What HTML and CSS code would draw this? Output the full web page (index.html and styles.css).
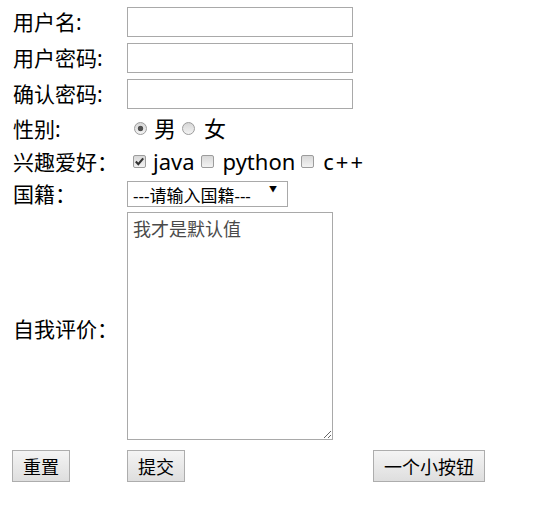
FILE: index.html
```html
<!DOCTYPE html>
<html lang="zh-CN">
<head>
<meta charset="utf-8">
<title>注册</title>
<link rel="stylesheet" href="styles.css">
</head>
<body>
<form class="form">
  <div class="row row-text">
    <span class="label">用户名:</span>
    <input class="text" type="text">
  </div>
  <div class="row row-text">
    <span class="label">用户密码:</span>
    <input class="text" type="password">
  </div>
  <div class="row row-text">
    <span class="label">确认密码:</span>
    <input class="text" type="password">
  </div>
  <div class="row row-choice">
    <span class="label">性别:</span>
    <span class="options">
      <input class="radio radio-first" type="radio" name="sex" checked><span class="opt">男</span>
      <input class="radio" type="radio" name="sex"><span class="opt opt-wide">女</span>
    </span>
  </div>
  <div class="row row-choice">
    <span class="label">兴趣爱好：</span>
    <span class="options">
      <input class="check check-first" type="checkbox" checked><span class="opt">java</span>
      <input class="check" type="checkbox"><span class="opt opt-wide">python</span>
      <input class="check" type="checkbox"><span class="opt opt-spaced">c++</span>
    </span>
  </div>
  <div class="row row-select">
    <span class="label">国籍：</span>
    <span class="select-wrap">
      <select class="select"><option>---请输入国籍---</option></select>
    </span>
  </div>
  <div class="row row-area">
    <span class="label label-area">自我评价：</span>
    <textarea class="area">我才是默认值</textarea>
  </div>
  <div class="row row-btns">
    <span><button class="btn" type="reset">重置</button></span>
    <span><button class="btn" type="submit">提交</button></span>
    <span><button class="btn" type="button">一个小按钮</button></span>
  </div>
</form>
</body>
</html>
```

FILE: styles.css
```css
html, body {
  margin: 0;
  padding: 0;
  background: #ffffff;
}

body {
  width: 560px;
  height: 518px;
  font-family: "Noto Sans", "Noto Sans CJK SC", sans-serif;
  color: #000000;
}

.form {
  display: flex;
  flex-direction: column;
  padding: 7px 0 0 12px;
  margin: 0;
}

.row {
  display: grid;
  grid-template-columns: 115px 246px auto;
  align-items: center;
  margin-top: 6px;
}

.row:first-child {
  margin-top: 0;
}

.row-text { height: 30px; }
.row-choice { height: 27px; }
.row-select { height: 26px; }
.row-area { margin-top: 5px; }
.row-btns { margin-top: 10px; height: 32px; }

.label {
  font-size: 21px;
  line-height: 26px;
  padding-left: 1px;
  white-space: nowrap;
}

.label-area {
  padding-top: 6px;
}

.text {
  box-sizing: border-box;
  width: 226px;
  height: 30px;
  margin: 0;
  padding: 0 4px;
  border: 1px solid #a9a9a9;
  background: #ffffff;
  font-size: 16px;
  outline: none;
}

.options {
  display: flex;
  align-items: center;
  font-size: 22px;
  line-height: 27px;
  white-space: nowrap;
}

.opt {
  margin-left: 7px;
  margin-right: 6px;
}

.opt-wide {
  margin-left: 9px;
}

.opt-spaced {
  margin-left: 9px;
  letter-spacing: 2px;
}

.radio {
  appearance: none;
  -webkit-appearance: none;
  box-sizing: border-box;
  width: 13px;
  height: 13px;
  margin: 0;
  border: 1px solid #9c9c9c;
  border-radius: 50%;
  background: linear-gradient(#d6d6d6, #f3f3f3);
  flex: none;
}

.radio:checked {
  background:
    radial-gradient(circle at center, #505050 0, #505050 2.4px, rgba(80,80,80,0) 3.1px),
    linear-gradient(#d6d6d6, #f3f3f3);
}

.radio-first { margin-left: 7px; }

.check {
  appearance: none;
  -webkit-appearance: none;
  box-sizing: border-box;
  width: 13px;
  height: 13px;
  margin: 0;
  border: 1px solid #9c9c9c;
  border-radius: 2px;
  background: linear-gradient(#d8d8d8, #f3f3f3);
  flex: none;
}

.check:checked {
  background:
    url("data:image/svg+xml,%3Csvg xmlns='http://www.w3.org/2000/svg' width='11' height='11' viewBox='0 0 11 11'%3E%3Cpath d='M1.8 5.6 L4.3 8.2 L9.2 2.4' fill='none' stroke='%23333' stroke-width='2.1'/%3E%3C/svg%3E") center / 11px 11px no-repeat,
    linear-gradient(#d8d8d8, #f3f3f3);
}

.check-first { margin-left: 6px; }

.select-wrap {
  position: relative;
  display: inline-block;
  width: 161px;
  height: 26px;
}

.select {
  appearance: none;
  -webkit-appearance: none;
  box-sizing: border-box;
  width: 161px;
  height: 26px;
  margin: 0;
  padding: 2px 0 0 5px;
  border: 1px solid #a9a9a9;
  border-radius: 0;
  background: #ffffff;
  font-family: "Noto Sans", "Noto Sans CJK SC", sans-serif;
  font-size: 17px;
  color: #000000;
  outline: none;
}

.select-wrap::after {
  content: "▼";
  position: absolute;
  right: 11px;
  top: 3px;
  font-size: 8px;
  line-height: 10px;
  color: #000000;
  pointer-events: none;
}

.area {
  box-sizing: border-box;
  width: 206px;
  height: 228px;
  margin: 0;
  padding: 4px 5px;
  border: 1px solid #a9a9a9;
  font-family: "Noto Sans CJK SC", sans-serif;
  font-size: 18px;
  line-height: 22px;
  color: #4a4a4a;
  background: #ffffff;
  outline: none;
}

.btn {
  box-sizing: border-box;
  height: 32px;
  margin: 0;
  padding: 0 10px;
  border: 1px solid #adadad;
  border-radius: 0;
  background: linear-gradient(#f4f4f4, #dedede);
  font-family: "Noto Sans CJK SC", sans-serif;
  font-size: 18px;
  line-height: 30px;
  color: #000000;
}
```
